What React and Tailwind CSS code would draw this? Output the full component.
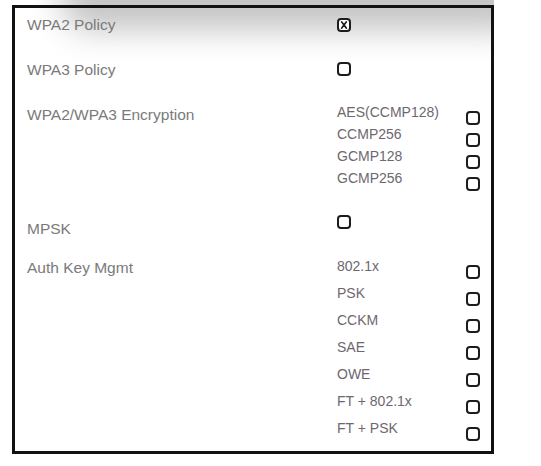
import React from "react";

const encryptions = ["AES(CCMP128)", "CCMP256", "GCMP128", "GCMP256"];
const akms = ["802.1x", "PSK", "CCKM", "SAE", "OWE", "FT + 802.1x", "FT + PSK"];

// little rounded square, optionally crossed
const Box = ({ checked = false, className = "" }) => (
  <svg width="14" height="14" viewBox="0 0 14 14" className={`shrink-0 ${className}`}>
    <rect x="1" y="1" width="12" height="12" rx="3" fill="white" stroke="#1c1c1c" strokeWidth="2" />
    {checked && (
      <path d="M4.6 3.8 L9.4 10.2 M9.4 3.8 L4.6 10.2" stroke="#1c1c1c" strokeWidth="1.6" strokeLinecap="round" />
    )}
  </svg>
);

const Row = ({ label, height, children }) => (
  <div className="flex" style={{ height }}>
    <div className="w-[322px] shrink-0 pl-3 text-[15.5px] leading-5 text-[#7a7a7a]">{label}</div>
    <div>{children}</div>
  </div>
);

export default function App() {
  return (
    <div
      className="relative h-[466px] w-[541px] overflow-hidden bg-white text-[14px]"
      style={{ fontFamily: '"Liberation Sans", Arial, sans-serif' }}
    >
      {/* soft gray shade along the top edge, cut off at the frame's right side */}
      <div className="absolute left-0 top-0 h-[70px] w-[494px] overflow-hidden">
        <div className="absolute left-[60px] top-[-34px] h-[64px] w-[470px] rounded-full bg-[#c4c4c4] blur-[16px]" />
      </div>

      <div className="relative ml-3 mt-[5px] h-[449px] w-[482px] border-[3px] border-[#111] pt-[7px]">
        <Row label="WPA2 Policy" height={45}>
          <Box checked className="mt-[3px]" />
        </Row>
        <Row label="WPA3 Policy" height={45}>
          <Box className="mt-[2px]" />
        </Row>
        <Row label="WPA2/WPA3 Encryption" height={114}>
          <div className="-mt-[4px]">
            {encryptions.map((e) => (
              <div key={e} className="flex h-[22px]">
                <span className="w-[129px] leading-[22px] text-[#6d6870]">{e}</span>
                <Box className="mt-[10px]" />
              </div>
            ))}
          </div>
        </Row>
        <Row label="MPSK" height={39}>
          <Box className="-mt-[4px]" />
        </Row>
        <Row label="Auth Key Mgmt" height={190}>
          <div className="-mt-[5px]">
            {akms.map((a) => (
              <div key={a} className="flex h-[27px]">
                <span className="w-[129px] leading-[27px] text-[#6d6870]">{a}</span>
                <Box className="mt-[12px]" />
              </div>
            ))}
          </div>
        </Row>
      </div>
    </div>
  );
}
